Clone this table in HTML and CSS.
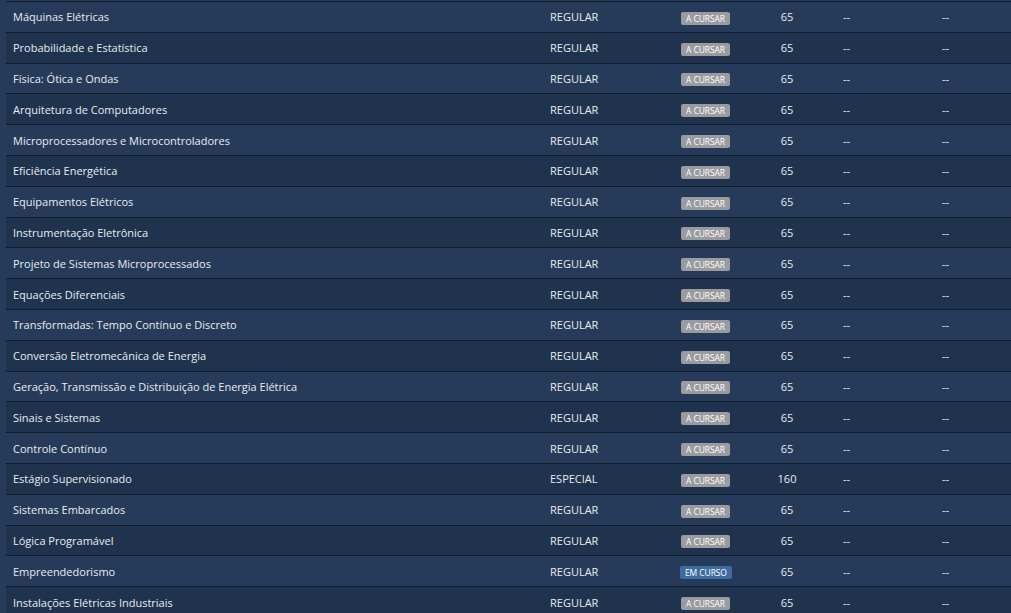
FILE: index.html
```html
<!DOCTYPE html>
<html lang="pt">
<head>
<meta charset="utf-8">
<link rel="stylesheet" href="styles.css">
</head>
<body>
<div class="table">
  <div class="row"><span class="c-name">Máquinas Elétricas</span><span class="c-type">REGULAR</span><span class="c-status"><span class="badge">A CURSAR</span></span><span class="c-hours">65</span><span class="c-a">--</span><span class="c-b">--</span></div>
  <div class="row"><span class="c-name">Probabilidade e Estatística</span><span class="c-type">REGULAR</span><span class="c-status"><span class="badge">A CURSAR</span></span><span class="c-hours">65</span><span class="c-a">--</span><span class="c-b">--</span></div>
  <div class="row"><span class="c-name">Física: Ótica e Ondas</span><span class="c-type">REGULAR</span><span class="c-status"><span class="badge">A CURSAR</span></span><span class="c-hours">65</span><span class="c-a">--</span><span class="c-b">--</span></div>
  <div class="row"><span class="c-name">Arquitetura de Computadores</span><span class="c-type">REGULAR</span><span class="c-status"><span class="badge">A CURSAR</span></span><span class="c-hours">65</span><span class="c-a">--</span><span class="c-b">--</span></div>
  <div class="row"><span class="c-name">Microprocessadores e Microcontroladores</span><span class="c-type">REGULAR</span><span class="c-status"><span class="badge">A CURSAR</span></span><span class="c-hours">65</span><span class="c-a">--</span><span class="c-b">--</span></div>
  <div class="row"><span class="c-name">Eficiência Energética</span><span class="c-type">REGULAR</span><span class="c-status"><span class="badge">A CURSAR</span></span><span class="c-hours">65</span><span class="c-a">--</span><span class="c-b">--</span></div>
  <div class="row"><span class="c-name">Equipamentos Elétricos</span><span class="c-type">REGULAR</span><span class="c-status"><span class="badge">A CURSAR</span></span><span class="c-hours">65</span><span class="c-a">--</span><span class="c-b">--</span></div>
  <div class="row"><span class="c-name">Instrumentação Eletrônica</span><span class="c-type">REGULAR</span><span class="c-status"><span class="badge">A CURSAR</span></span><span class="c-hours">65</span><span class="c-a">--</span><span class="c-b">--</span></div>
  <div class="row"><span class="c-name">Projeto de Sistemas Microprocessados</span><span class="c-type">REGULAR</span><span class="c-status"><span class="badge">A CURSAR</span></span><span class="c-hours">65</span><span class="c-a">--</span><span class="c-b">--</span></div>
  <div class="row"><span class="c-name">Equações Diferenciais</span><span class="c-type">REGULAR</span><span class="c-status"><span class="badge">A CURSAR</span></span><span class="c-hours">65</span><span class="c-a">--</span><span class="c-b">--</span></div>
  <div class="row"><span class="c-name">Transformadas: Tempo Contínuo e Discreto</span><span class="c-type">REGULAR</span><span class="c-status"><span class="badge">A CURSAR</span></span><span class="c-hours">65</span><span class="c-a">--</span><span class="c-b">--</span></div>
  <div class="row"><span class="c-name">Conversão Eletromecânica de Energia</span><span class="c-type">REGULAR</span><span class="c-status"><span class="badge">A CURSAR</span></span><span class="c-hours">65</span><span class="c-a">--</span><span class="c-b">--</span></div>
  <div class="row"><span class="c-name">Geração, Transmissão e Distribuição de Energia Elétrica</span><span class="c-type">REGULAR</span><span class="c-status"><span class="badge">A CURSAR</span></span><span class="c-hours">65</span><span class="c-a">--</span><span class="c-b">--</span></div>
  <div class="row"><span class="c-name">Sinais e Sistemas</span><span class="c-type">REGULAR</span><span class="c-status"><span class="badge">A CURSAR</span></span><span class="c-hours">65</span><span class="c-a">--</span><span class="c-b">--</span></div>
  <div class="row"><span class="c-name">Controle Contínuo</span><span class="c-type">REGULAR</span><span class="c-status"><span class="badge">A CURSAR</span></span><span class="c-hours">65</span><span class="c-a">--</span><span class="c-b">--</span></div>
  <div class="row"><span class="c-name">Estágio Supervisionado</span><span class="c-type">ESPECIAL</span><span class="c-status"><span class="badge">A CURSAR</span></span><span class="c-hours">160</span><span class="c-a">--</span><span class="c-b">--</span></div>
  <div class="row"><span class="c-name">Sistemas Embarcados</span><span class="c-type">REGULAR</span><span class="c-status"><span class="badge">A CURSAR</span></span><span class="c-hours">65</span><span class="c-a">--</span><span class="c-b">--</span></div>
  <div class="row"><span class="c-name">Lógica Programável</span><span class="c-type">REGULAR</span><span class="c-status"><span class="badge">A CURSAR</span></span><span class="c-hours">65</span><span class="c-a">--</span><span class="c-b">--</span></div>
  <div class="row"><span class="c-name">Empreendedorismo</span><span class="c-type">REGULAR</span><span class="c-status"><span class="badge badge-active">EM CURSO</span></span><span class="c-hours">65</span><span class="c-a">--</span><span class="c-b">--</span></div>
  <div class="row"><span class="c-name">Instalações Elétricas Industriais</span><span class="c-type">REGULAR</span><span class="c-status"><span class="badge">A CURSAR</span></span><span class="c-hours">65</span><span class="c-a">--</span><span class="c-b">--</span></div>
</div>
</body>
</html>
```
FILE: styles.css
```css
html, body {
  margin: 0;
  padding: 0;
  background: #263b5a;
  overflow: hidden;
}
body {
  font-family: "Open Sans", "DejaVu Sans", sans-serif;
  font-size: 11px;
  color: #e8ebef;
}
.table {
  margin-left: 6px;
  padding-top: 1px;
}
.row {
  display: grid;
  grid-template-columns: 537px 131px 84px 58px 119px 1fr;
  align-items: center;
  border-top: 1px solid #111b2b;
  background: #263b5a;
  line-height: 14px;
  padding-top: 1px;
  box-sizing: content-box;
  height: 28.8px;
}
.row:nth-child(even) {
  background: #1f334f;
}
.c-name { padding-left: 7px; white-space: nowrap; }
.c-type { padding-left: 7px; }
.c-status { padding-left: 7px; display: flex; }
.c-hours { text-align: center; }
.c-a { padding-left: 27px; }
.c-b { padding-left: 7px; }
.badge {
  display: inline-block;
  background: #999b9e;
  color: #ffffff;
  font-size: 8.5px;
  line-height: 13px;
  height: 13px;
  padding: 0 5px;
  border-radius: 2px;
  text-transform: uppercase;
  letter-spacing: -0.1px;
  margin-top: 2px;
}
.badge-active {
  background: #3e6ca0;
  margin-left: -1px;
}
```
